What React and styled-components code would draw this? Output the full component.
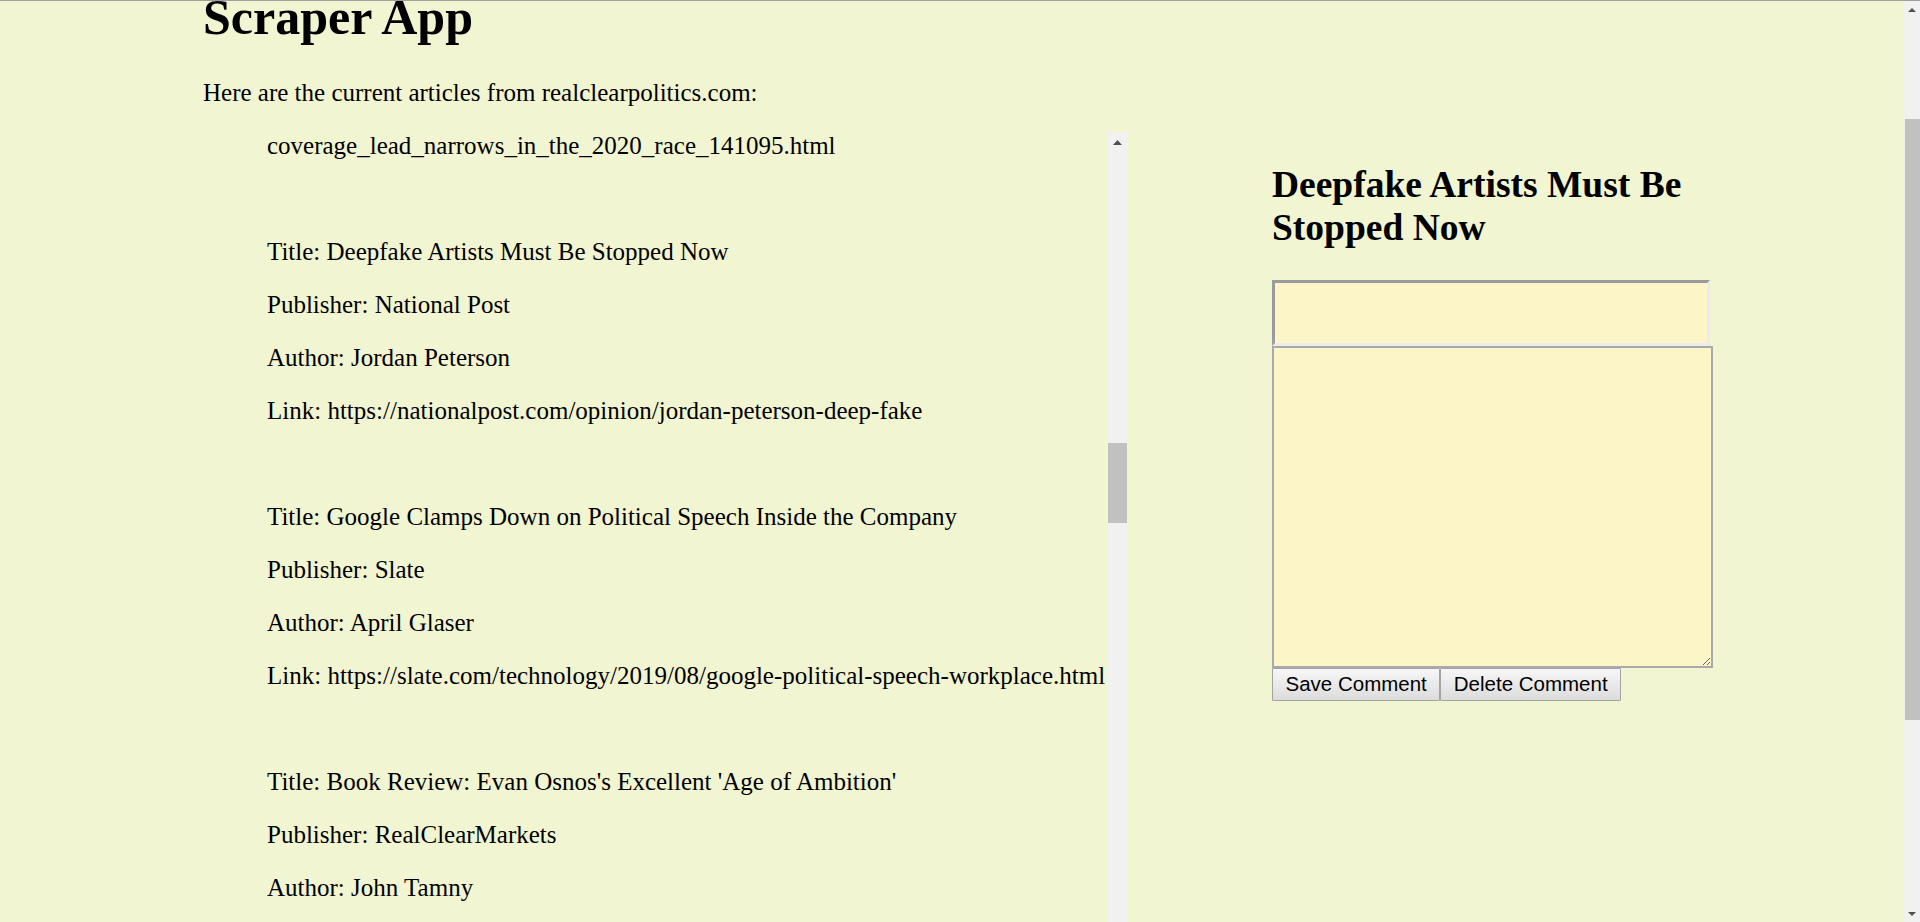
import React, { useLayoutEffect, useRef } from 'react';
import styled, { createGlobalStyle } from 'styled-components';

const PAGE_SCROLL = 136;
const TITLE_OFFSET = 106;

const GlobalStyle = createGlobalStyle`
  html, body {
    margin: 0;
    background: #f2f5d1;
  }
  body {
    color: #000;
    font-family: "Liberation Serif", "Times New Roman", serif;
    font-size: 25px;
    overflow: hidden;
  }
`;

const Screen = styled.div`
  box-sizing: border-box;
  display: flex;
  height: 100vh;
  border-top: 1px solid #a0a0a0;
`;

const Viewport = styled.div`
  flex: 1;
  overflow: hidden;
`;

const Page = styled.div`
  padding: 123px 0 0 203px;
`;

const Heading = styled.h1`
  font-size: 50px;
  line-height: 58px;
  font-weight: bold;
  margin: 0 0 33px;
`;

const Intro = styled.p`
  line-height: 28px;
  margin: 0 0 25px;
`;

const Columns = styled.div`
  display: flex;
  align-items: flex-start;
`;

const ArticleList = styled.div`
  display: flex;
  width: 925px;
  height: 820px;
  flex-shrink: 0;
`;

const ArticleScroller = styled.div`
  flex: 1;
  overflow: hidden;
  padding-left: 64px;
`;

const Line = styled.p`
  line-height: 28px;
  margin: 25px 0;
`;

/* scrollbars are drawn by hand so they match the Windows look */
const Scrollbar = styled.div`
  width: ${(p) => p.size}px;
  flex-shrink: 0;
  display: flex;
  flex-direction: column;
  background: #f1f1f1;
`;

const ScrollArrow = styled.div`
  height: ${(p) => p.size}px;
  flex-shrink: 0;
  display: flex;
  align-items: center;
  justify-content: center;

  svg {
    display: block;
    transform: ${(p) => (p.down ? 'rotate(180deg)' : 'none')};
  }
`;

const ScrollTrack = styled.div`
  flex: 1;
  min-height: 0;
`;

const ScrollThumb = styled.div`
  height: ${(p) => p.length}px;
  margin: ${(p) => p.offset}px ${(p) => p.right}px 0 ${(p) => p.left}px;
  background: #c1c1c1;
`;

const NotePanel = styled.div`
  width: 441px;
  margin-left: 144px;
  flex-shrink: 0;
`;

const NoteTitle = styled.h2`
  font-size: 37.5px;
  line-height: 43px;
  font-weight: bold;
  margin: 31px 0;
`;

const TitleInput = styled.input`
  display: block;
  box-sizing: border-box;
  width: 438px;
  height: 66px;
  margin: 0;
  padding: 1px 3px;
  border: 3px solid;
  border-color: #9b9b9b #ececec #ececec #9b9b9b;
  background: #fbf5c8;
  font-family: "Liberation Sans", Arial, sans-serif;
  font-size: 20px;
  outline: none;
`;

const NoteBody = styled.textarea`
  display: block;
  box-sizing: border-box;
  width: 441px;
  height: 322px;
  margin: 0;
  padding: 3px;
  border: 2px solid #a9a9a9;
  background: #fbf5c8;
  font-family: "Liberation Mono", monospace;
  font-size: 16px;
  resize: both;
  outline: none;
`;

const ButtonRow = styled.div`
  display: flex;
`;

const ActionButton = styled.button`
  box-sizing: border-box;
  height: 33px;
  margin: 0;
  padding: 0 12.5px;
  border: 1px solid #a3a3a3;
  border-radius: 1px;
  background: linear-gradient(#f7f7f7, #dcdcdc);
  color: #000;
  font-family: "Liberation Sans", Arial, sans-serif;
  font-size: 20.5px;
  line-height: 1;
  cursor: pointer;
`;

const Arrow = ({ w, h }) => (
  <svg width={w} height={h} viewBox={`0 0 ${w} ${h}`}>
    <polygon points={`0,${h} ${w / 2},0 ${w},${h}`} fill="#505050" />
  </svg>
);

const VScrollbar = ({ size, arrow, offset, length, left, right }) => (
  <Scrollbar size={size}>
    <ScrollArrow size={size}>
      <Arrow w={arrow[0]} h={arrow[1]} />
    </ScrollArrow>
    <ScrollTrack>
      <ScrollThumb offset={offset} length={length} left={left} right={right} />
    </ScrollTrack>
    <ScrollArrow size={size} down>
      <Arrow w={arrow[0]} h={arrow[1]} />
    </ScrollArrow>
  </Scrollbar>
);

const deepfake = {
  title: 'Deepfake Artists Must Be Stopped Now',
  publisher: 'National Post',
  author: 'Jordan Peterson',
  link: 'https://nationalpost.com/opinion/jordan-peterson-deep-fake',
};

const google = {
  title: 'Google Clamps Down on Political Speech Inside the Company',
  publisher: 'Slate',
  author: 'April Glaser',
  link: 'https://slate.com/technology/2019/08/google-political-speech-workplace.html',
};

const bookReview = {
  title: "Book Review: Evan Osnos's Excellent 'Age of Ambition'",
  publisher: 'RealClearMarkets',
  author: 'John Tamny',
  link: 'https://www.realclearmarkets.com/articles/2019/08/23/book_review_age_of_ambition_103868.html',
};

const coverage = {
  title: 'Biden Coverage Lead Narrows in the 2020 Race',
  publisher: 'RealClearPolitics',
  author: 'RCP Staff',
  link: 'https://www.realclearpolitics.com/articles/2019/08/23/coverage_lead_narrows_in_the_2020_race_141095.html',
};

const cycle = [deepfake, google, bookReview];
const earlier = Array.from({ length: 11 }, (_, i) => cycle[i % 3]);
const later = Array.from({ length: 6 }, (_, i) => cycle[i % 3]);
const articles = [...earlier, coverage, deepfake, google, bookReview, ...later];
const FOCUS = earlier.length + 1;

// let long urls wrap after a slash, like the original browser does
const breakable = (url) =>
  url.split('/').map((part, i, all) => (
    <React.Fragment key={i}>
      {part}
      {i < all.length - 1 && (
        <>
          /<wbr />
        </>
      )}
    </React.Fragment>
  ));

const Article = React.forwardRef(({ item }, ref) => (
  <>
    <Line ref={ref}>Title: {item.title}</Line>
    <Line>Publisher: {item.publisher}</Line>
    <Line>Author: {item.author}</Line>
    <Line>Link: {breakable(item.link)}</Line>
    <br />
  </>
));

export default function App() {
  const viewRef = useRef(null);
  const listRef = useRef(null);
  const focusRef = useRef(null);

  useLayoutEffect(() => {
    if (listRef.current && focusRef.current) {
      listRef.current.scrollTop = focusRef.current.offsetTop - listRef.current.offsetTop - TITLE_OFFSET;
    }
    if (viewRef.current) viewRef.current.scrollTop = PAGE_SCROLL;
  }, []);

  return (
    <>
      <GlobalStyle />
      <Screen>
        <Viewport ref={viewRef}>
          <Page>
            <Heading>Scraper App</Heading>
            <Intro>Here are the current articles from realclearpolitics.com:</Intro>
            <Columns>
              <ArticleList>
                <ArticleScroller ref={listRef}>
                  {articles.map((item, i) => (
                    <Article key={i} item={item} ref={i === FOCUS ? focusRef : undefined} />
                  ))}
                </ArticleScroller>
                <VScrollbar size={21} arrow={[9, 5]} offset={290} length={80} left={1} right={1} />
              </ArticleList>
              <NotePanel>
                <NoteTitle>Deepfake Artists Must Be Stopped Now</NoteTitle>
                <TitleInput type="text" />
                <NoteBody />
                <ButtonRow>
                  <ActionButton>Save Comment</ActionButton>
                  <ActionButton>Delete Comment</ActionButton>
                </ButtonRow>
              </NotePanel>
            </Columns>
          </Page>
        </Viewport>
        <VScrollbar size={17} arrow={[8, 4]} offset={101} length={601} left={2} right={0} />
      </Screen>
    </>
  );
}
